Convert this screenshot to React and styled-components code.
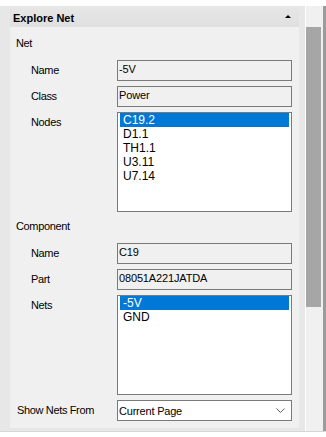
import React from "react";
import styled, { createGlobalStyle } from "styled-components";

const GlobalStyle = createGlobalStyle`
  html, body {
    margin: 0;
    padding: 0;
    background: #fff;
  }
  body {
    font-family: "Liberation Sans", Arial, sans-serif;
    font-size: 11px;
    color: #000;
  }
`;

const Page = styled.div`
  width: 326px;
  height: 437px;
  padding-top: 6px;
  box-sizing: border-box;
  overflow: hidden;
  background: #fff;
`;

const Window = styled.div`
  display: flex;
  height: 425px;
  border-bottom: 1px solid #d6d6d6;
`;

const Frame = styled.div`
  width: 305px;
  display: flex;
  flex-direction: column;
  padding: 2px 6px 3px 10px;
  box-sizing: border-box;
  background: #e7e7e7;
`;

const Panel = styled.div`
  flex: 1;
  display: flex;
  flex-direction: column;
  background: #f0f0f0;
`;

const Header = styled.div`
  height: 19px;
  display: flex;
  align-items: center;
  justify-content: space-between;
  padding: 0 8px 0 3px;
  background: linear-gradient(#e6e6e6, #e0e0e0);
  font-weight: bold;
  font-size: 11px;
`;

const Caret = styled.span`
  width: 0;
  height: 0;
  border-left: 3px solid transparent;
  border-right: 3px solid transparent;
  border-bottom: 3px solid #000;
  margin-top: -2px;
`;

const Body = styled.div`
  display: flex;
  flex-direction: column;
  padding: 10px 7px 0 6px;
`;

const SectionTitle = styled.div`
  line-height: 13px;
  letter-spacing: -0.35px;
  margin: ${(p) => (p.$first ? "0" : "8px")} 0 10px;
`;

const Fields = styled.div`
  display: flex;
  flex-direction: column;
  gap: 5px;
`;

const Row = styled.div`
  display: grid;
  grid-template-columns: 101px 175px;
`;

const Label = styled.div`
  padding: 4px 0 0 ${(p) => (p.$indent ? 15 : 1)}px;
  line-height: 13px;
  letter-spacing: -0.35px;
`;

const TextBox = styled.div`
  height: 21px;
  box-sizing: border-box;
  border: 1px solid #7a7a7a;
  background: #f0f0f0;
  padding: 2px 1px;
  line-height: 13px;
  letter-spacing: -0.15px;
`;

const ListBox = styled.div`
  height: 100px;
  box-sizing: border-box;
  border: 1px solid #7a7a7a;
  background: #fff;
  padding: 0 2px;
  font-size: 12px;
`;

const ListItem = styled.div`
  height: 14px;
  line-height: 14px;
  padding-left: 3px;
  background: ${(p) => (p.$selected ? "#0078d7" : "transparent")};
  color: ${(p) => (p.$selected ? "#fff" : "#000")};
`;

const Select = styled.div`
  height: 21px;
  box-sizing: border-box;
  border: 1px solid #7a7a7a;
  background: #fff;
  display: flex;
  align-items: center;
  justify-content: space-between;
  padding: 0 6px 0 1px;
  letter-spacing: -0.2px;
`;

const ScrollBar = styled.div`
  flex: 1;
  display: flex;
  padding: 21px 2px 0 0;
  background: #f0f0f0;
  border-left: 1px solid #fff;
  border-right: 3px solid #9b9b9b;
`;

const Thumb = styled.div`
  width: 15px;
  height: 280px;
  background: #a6a6a6;
`;

const Chevron = () => (
  <svg width="9" height="6" viewBox="0 0 9 6">
    <polyline points="0.5,0.5 4.5,4.5 8.5,0.5" fill="none" stroke="#606060" strokeWidth="1" />
  </svg>
);

const List = ({ items, selected }) => (
  <ListBox>
    {items.map((item) => (
      <ListItem key={item} $selected={item === selected}>
        {item}
      </ListItem>
    ))}
  </ListBox>
);

export default function App() {
  return (
    <>
      <GlobalStyle />
      <Page>
        <Window>
          <Frame>
            <Panel>
              <Header>
                Explore Net
                <Caret />
              </Header>
              <Body>
                <SectionTitle $first>Net</SectionTitle>
                <Fields>
                  <Row>
                    <Label $indent>Name</Label>
                    <TextBox>-5V</TextBox>
                  </Row>
                  <Row>
                    <Label $indent>Class</Label>
                    <TextBox>Power</TextBox>
                  </Row>
                  <Row>
                    <Label $indent>Nodes</Label>
                    <List
                      items={["C19.2", "D1.1", "TH1.1", "U3.11", "U7.14"]}
                      selected="C19.2"
                    />
                  </Row>
                </Fields>

                <SectionTitle>Component</SectionTitle>
                <Fields>
                  <Row>
                    <Label $indent>Name</Label>
                    <TextBox>C19</TextBox>
                  </Row>
                  <Row>
                    <Label $indent>Part</Label>
                    <TextBox>08051A221JATDA</TextBox>
                  </Row>
                  <Row>
                    <Label $indent>Nets</Label>
                    <List items={["-5V", "GND"]} selected="-5V" />
                  </Row>
                  <Row>
                    <Label>Show Nets From</Label>
                    <Select>
                      Current Page
                      <Chevron />
                    </Select>
                  </Row>
                </Fields>
              </Body>
            </Panel>
          </Frame>
          <ScrollBar>
            <Thumb />
          </ScrollBar>
        </Window>
      </Page>
    </>
  );
}
